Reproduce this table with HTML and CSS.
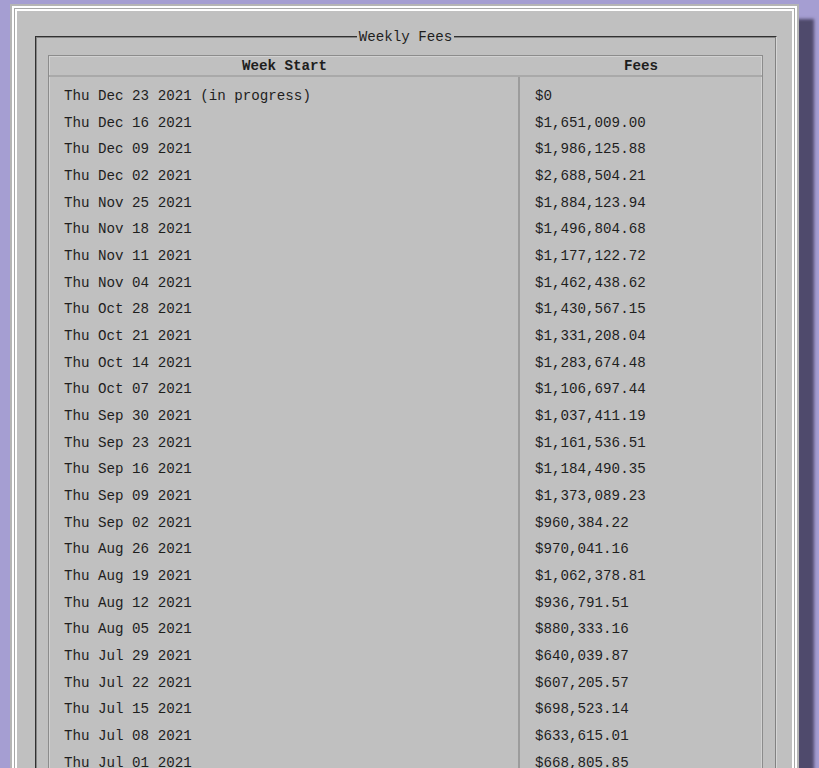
FILE: index.html
```html
<!DOCTYPE html>
<html lang="en">

<head>
    <meta charset="UTF-8">
    <title>Weekly Fees</title>
    <meta name="viewport" content="width=device-width, initial-scale=1.0">
    <link rel="stylesheet" href="styles.css">
</head>

<body>
    <main class="window">
        <fieldset class="panel">
            <legend class="panel-title">Weekly Fees</legend>
            <table class="fees">
                <colgroup>
                    <col class="fees-week">
                    <col class="fees-amount">
                </colgroup>
                <thead>
                    <tr>
                        <th>Week Start</th>
                        <th>Fees</th>
                    </tr>
                </thead>
                <tbody>
                    <tr><td>Thu Dec 23 2021 (in progress)</td><td>$0</td></tr>
                    <tr><td>Thu Dec 16 2021</td><td>$1,651,009.00</td></tr>
                    <tr><td>Thu Dec 09 2021</td><td>$1,986,125.88</td></tr>
                    <tr><td>Thu Dec 02 2021</td><td>$2,688,504.21</td></tr>
                    <tr><td>Thu Nov 25 2021</td><td>$1,884,123.94</td></tr>
                    <tr><td>Thu Nov 18 2021</td><td>$1,496,804.68</td></tr>
                    <tr><td>Thu Nov 11 2021</td><td>$1,177,122.72</td></tr>
                    <tr><td>Thu Nov 04 2021</td><td>$1,462,438.62</td></tr>
                    <tr><td>Thu Oct 28 2021</td><td>$1,430,567.15</td></tr>
                    <tr><td>Thu Oct 21 2021</td><td>$1,331,208.04</td></tr>
                    <tr><td>Thu Oct 14 2021</td><td>$1,283,674.48</td></tr>
                    <tr><td>Thu Oct 07 2021</td><td>$1,106,697.44</td></tr>
                    <tr><td>Thu Sep 30 2021</td><td>$1,037,411.19</td></tr>
                    <tr><td>Thu Sep 23 2021</td><td>$1,161,536.51</td></tr>
                    <tr><td>Thu Sep 16 2021</td><td>$1,184,490.35</td></tr>
                    <tr><td>Thu Sep 09 2021</td><td>$1,373,089.23</td></tr>
                    <tr><td>Thu Sep 02 2021</td><td>$960,384.22</td></tr>
                    <tr><td>Thu Aug 26 2021</td><td>$970,041.16</td></tr>
                    <tr><td>Thu Aug 19 2021</td><td>$1,062,378.81</td></tr>
                    <tr><td>Thu Aug 12 2021</td><td>$936,791.51</td></tr>
                    <tr><td>Thu Aug 05 2021</td><td>$880,333.16</td></tr>
                    <tr><td>Thu Jul 29 2021</td><td>$640,039.87</td></tr>
                    <tr><td>Thu Jul 22 2021</td><td>$607,205.57</td></tr>
                    <tr><td>Thu Jul 15 2021</td><td>$698,523.14</td></tr>
                    <tr><td>Thu Jul 08 2021</td><td>$633,615.01</td></tr>
                    <tr><td>Thu Jul 01 2021</td><td>$668,805.85</td></tr>
                </tbody>
            </table>
        </fieldset>
    </main>
</body>

</html>
```

FILE: styles.css
```css
html {
    font-size: 14.2px;
}

html,
legend,
table {
    font-family: 'Liberation Mono', 'Courier New', monospace;
    color: #1e1e1e;
}

body {
    background: #a59ed2;
    margin: 0;
    padding: 4px 20px 0 10px;
    height: 764px;
    overflow: hidden;
}

.window {
    display: block;
    min-height: 900px;
    background-color: #c0c0c0;
    border: 2px solid #b5b5b5;
    box-shadow: inset 0 0 0 2px #fff, inset 0 0 0 3px #a8a8a8, inset 0 0 0 5px #fff, 15px 15px 3px #4f4a6c;
    padding: 23px 20px 0 23px;
}

.panel {
    margin: 0;
    padding: 10px 12px 0 11px;
    border: 2px groove #d0d0d0;
    border-color: #858585 #d6d6d6 #d6d6d6 #858585;
}

.panel-title {
    margin: 0 auto;
    padding: 0 2px;
    font-size: 1rem;
    line-height: 16px;
}

.fees {
    width: 100%;
    table-layout: fixed;
    border-spacing: 0;
    border: 1px solid #8c8c8c;
    box-shadow: inset 0 0 0 1px #d2d2d2;
    font-size: 1rem;
}

.fees-week {
    width: 471px;
}

.fees th {
    font-weight: 700;
    line-height: 16px;
    padding: 2px 0 1px 0;
    border-bottom: 2px solid #a9a9a9;
    text-align: center;
}

.fees td {
    line-height: 16.67px;
    padding: 5px 15px;
    text-align: left;
    white-space: nowrap;
}

.fees td:first-child {
    border-right: 2px solid #9c9c9c;
}

.fees tbody tr:first-child td {
    padding-top: 11px;
}
```
